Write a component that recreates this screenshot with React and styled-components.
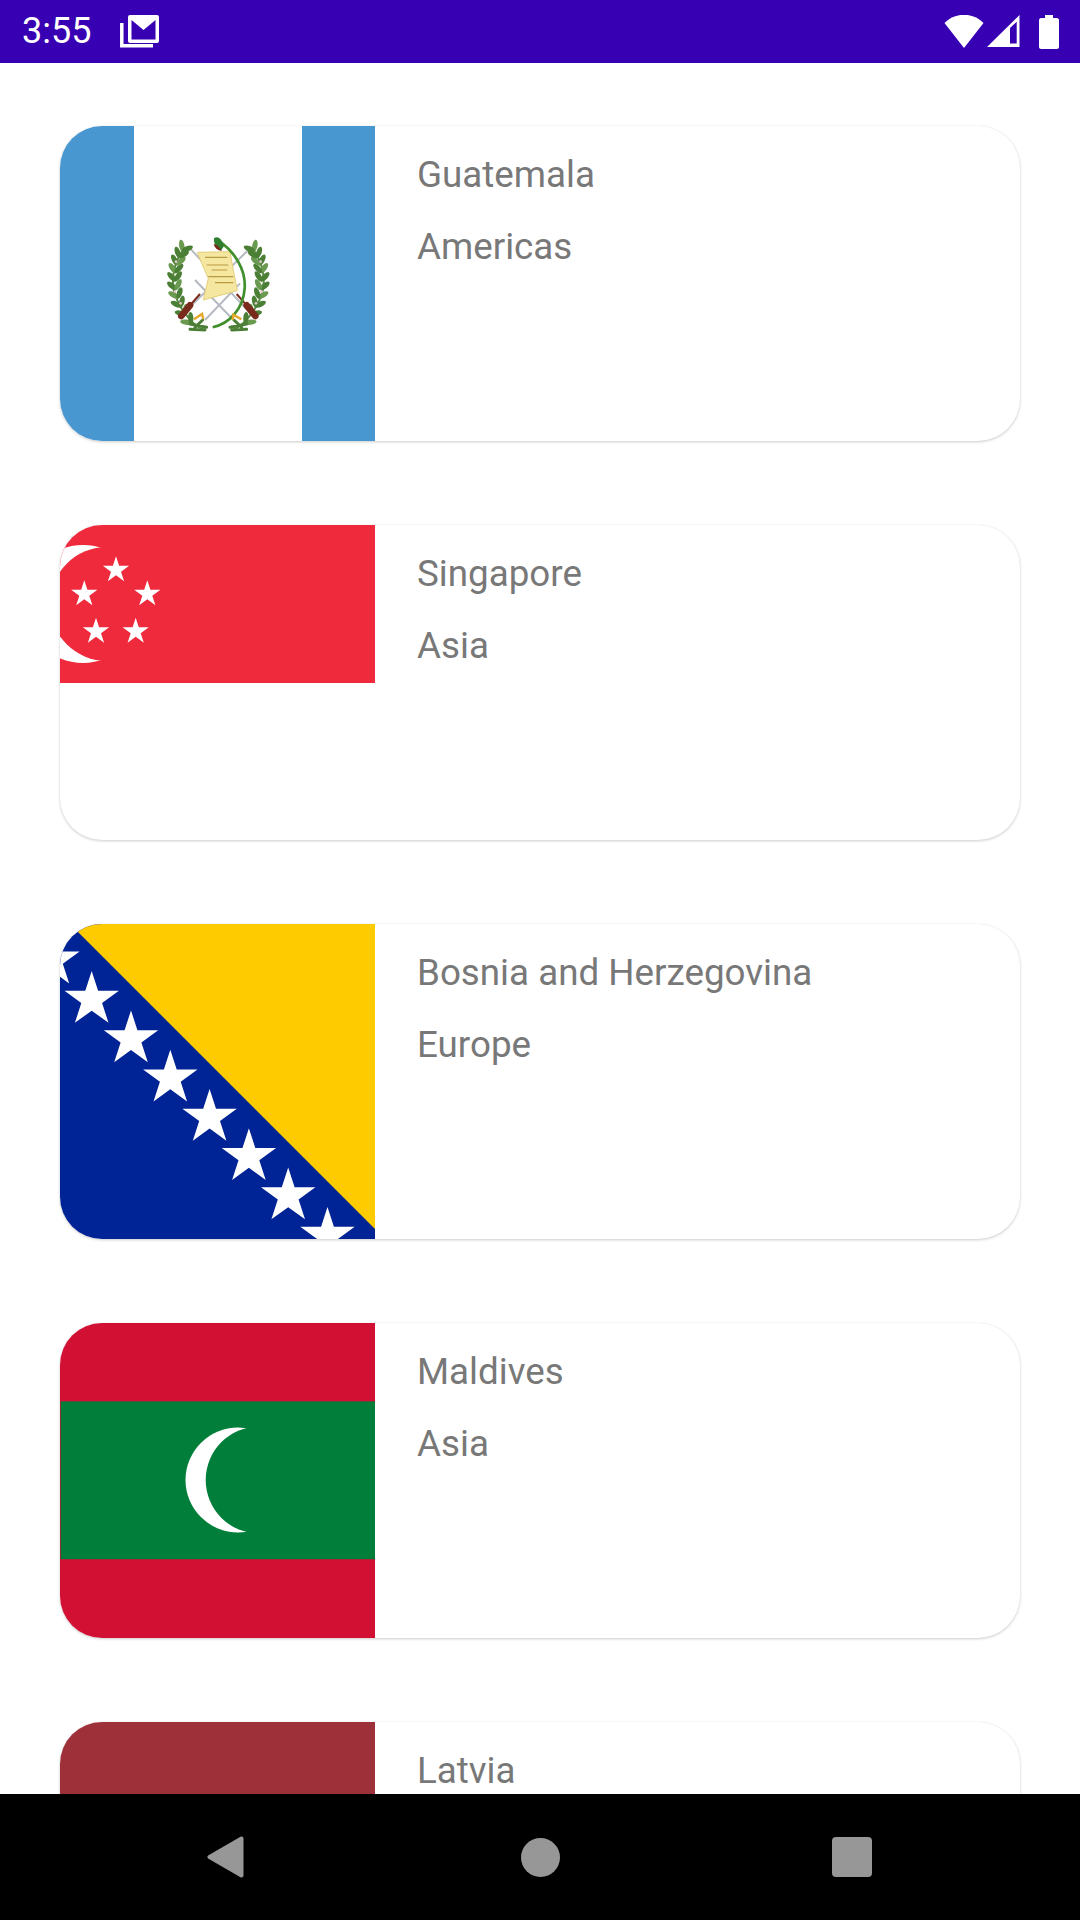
import React from "react";
import styled, { createGlobalStyle } from "styled-components";

const countries = [
  { name: "Guatemala", region: "Americas", Flag: GuatemalaFlag },
  { name: "Singapore", region: "Asia", Flag: SingaporeFlag },
  { name: "Bosnia and Herzegovina", region: "Europe", Flag: BosniaFlag },
  { name: "Maldives", region: "Asia", Flag: MaldivesFlag },
  { name: "Latvia", Flag: LatviaFlag },
];

// five pointed star with the tip up, as a polygon points string
const starPoints = (cx, cy, r) => {
  const pts = [];
  for (let i = 0; i < 10; i++) {
    const radius = i % 2 === 0 ? r : r * 0.382;
    const angle = (Math.PI / 5) * i - Math.PI / 2;
    pts.push(`${(cx + radius * Math.cos(angle)).toFixed(2)},${(cy + radius * Math.sin(angle)).toFixed(2)}`);
  }
  return pts.join(" ");
};

const App = () => {
  return (
    <Screen>
      <GlobalStyle />
      <StatusBar>
        <StatusLeft>
          <Clock>3:55</Clock>
          <MailIcon />
        </StatusLeft>
        <StatusRight>
          <WifiIcon />
          <SignalIcon />
          <BatteryIcon />
        </StatusRight>
      </StatusBar>
      <CountryList>
        {countries.map(({ name, region, Flag }) => (
          <CountryCard key={name}>
            <FlagBox>
              <Flag />
            </FlagBox>
            <CardText>
              <CardLine>{name}</CardLine>
              {region && <CardLine>{region}</CardLine>}
            </CardText>
          </CountryCard>
        ))}
      </CountryList>
      <NavBar>
        <NavIcon width="37" height="42" viewBox="0 0 37 42">
          <polygon points="2.500,21 34.500,2.500 34.500,39.500" fill="#979797" stroke="#979797" strokeWidth="4" strokeLinejoin="round" />
        </NavIcon>
        <NavIcon width="39" height="39" viewBox="0 0 39 39" $left="277px">
          <circle cx="19.5" cy="19.5" r="19.5" fill="#979797" />
        </NavIcon>
        <NavIcon width="40" height="40" viewBox="0 0 40 40" $left="272px">
          <rect width="40" height="40" rx="4" fill="#979797" />
        </NavIcon>
      </NavBar>
    </Screen>
  );
};

function MailIcon() {
  return (
    <StatusSvg width="40" height="33" viewBox="0 0 40 33" $left="8px">
      <path d="M1.800 8 V30.700 H33" fill="none" stroke="#fff" strokeWidth="3.500" />
      <rect x="8" y="0" width="31" height="28" rx="2" fill="#fff" />
      <path d="M11.500 5 L23.500 15 L35.500 5 V24.500 H11.500 Z" fill="#3700B3" />
    </StatusSvg>
  );
}

function WifiIcon() {
  return (
    <StatusSvg width="40" height="33" viewBox="0 0 40 33">
      <path d="M0.500 8 C11 -3 29 -3 39.500 8 L20 33 Z" fill="#fff" />
    </StatusSvg>
  );
}

function SignalIcon() {
  return (
    <StatusSvg width="33" height="33" viewBox="0 0 33 33" $left="3px">
      <path d="M32.500 0 V32 H0 Z" fill="#fff" />
      <path d="M23 13 L29.700 6.700 V28.500 H23 Z" fill="#3700B3" />
    </StatusSvg>
  );
}

function BatteryIcon() {
  return (
    <StatusSvg width="20" height="34" viewBox="0 0 20 34" $left="19px">
      <path d="M6 0 H14 V3 H18 C19 3 20 4 20 5 V32 C20 33 19 34 18 34 H2 C1 34 0 33 0 32 V5 C0 4 1 3 2 3 H6 Z" fill="#fff" />
    </StatusSvg>
  );
}

// leaves of one wreath branch, placed in pairs along a cubic stem
const wreathLeaves = () => {
  const p = [[165, 322], [95, 250], [92, 150], [128, 92]];
  const leaves = [];
  const n = 9;
  for (let i = 0; i <= n; i++) {
    const t = 0.06 + (i / n) * 0.94;
    const u = 1 - t;
    const x = u * u * u * p[0][0] + 3 * u * u * t * p[1][0] + 3 * u * t * t * p[2][0] + t * t * t * p[3][0];
    const y = u * u * u * p[0][1] + 3 * u * u * t * p[1][1] + 3 * u * t * t * p[2][1] + t * t * t * p[3][1];
    const dx = 3 * u * u * (p[1][0] - p[0][0]) + 6 * u * t * (p[2][0] - p[1][0]) + 3 * t * t * (p[3][0] - p[2][0]);
    const dy = 3 * u * u * (p[1][1] - p[0][1]) + 6 * u * t * (p[2][1] - p[1][1]) + 3 * t * t * (p[3][1] - p[2][1]);
    const angle = (Math.atan2(dy, dx) * 180) / Math.PI;
    [-42, 36].forEach((off) => {
      const a = angle + off;
      const rad = (a * Math.PI) / 180;
      leaves.push({ x: x + Math.cos(rad) * 15, y: y + Math.sin(rad) * 15, a });
    });
  }
  return leaves;
};

function Wreath() {
  return (
    <g>
      <path d="M190 328 C160 320 112 262 100 205 C95 160 105 125 128 92" fill="none" stroke="#5B8A42" strokeWidth="6" />
      {wreathLeaves().map(({ x, y, a }, i) => (
        <ellipse key={i} cx={x} cy={y} rx="18" ry="8" fill={i % 3 === 0 ? "#6B9A50" : "#4C7F36"} transform={`rotate(${a} ${x} ${y})`} />
      ))}
      <path d="M200 322 L150 312 M195 330 L150 328 M188 300 L165 322" stroke="#4C7F36" strokeWidth="9" strokeLinecap="round" />
      <circle cx="108" cy="125" r="4" fill="#E3C6CF" />
      <circle cx="105" cy="215" r="4" fill="#E3C6CF" />
      <circle cx="122" cy="250" r="4" fill="#E3C6CF" />
      <path d="M124 288 L150 256" stroke="#7A2B1C" strokeWidth="20" strokeLinecap="round" />
      <path d="M150 256 L180 222" stroke="#7A2B1C" strokeWidth="6" />
    </g>
  );
}

function GuatemalaFlag() {
  return (
    <FlagSvg viewBox="0 0 315 315" height="315">
      <rect width="315" height="315" fill="#fff" />
      <rect width="74" height="315" fill="#4997D0" />
      <rect x="242" width="73" height="315" fill="#4997D0" />
      <defs>
        <filter id="soft" x="-10%" y="-10%" width="120%" height="120%">
          <feGaussianBlur stdDeviation="1.200" />
        </filter>
      </defs>
      {/* drawn in a 450x360 box, then scaled down to the emblem's place */}
      <g transform="translate(80 94) scale(0.3333)" filter="url(#soft)">
        <path d="M150 85 L345 295 M325 90 L115 295 M165 180 L280 300 M195 300 L300 190" stroke="#B5BAC0" strokeWidth="6" fill="none" />
        <Wreath />
        <g transform="matrix(-1 0 0 1 470 0)">
          <Wreath />
        </g>
        <path d="M172 97 L270 95 L280 150 L292 212 L190 240 L205 175 L185 130 Z" fill="#F5E6A0" stroke="#E3CF7C" strokeWidth="3" />
        <path d="M200 135 H265 M215 150 H262 M205 170 H280 M225 188 H280 M195 112 H262" stroke="#B99A44" strokeWidth="3.500" />
        <path d="M235 62 C285 95 318 150 314 205 C310 265 270 310 218 322" fill="none" stroke="#3F8F2C" strokeWidth="8" />
        <path d="M222 55 C232 46 245 55 252 78 L243 92 C232 88 220 72 222 55 Z" fill="#2F7F2E" />
        <path d="M221 72 C224 85 234 92 246 92 L232 76 Z" fill="#7A2B1C" />
        <path d="M162 298 L186 282 L190 298 M304 298 L280 284 L278 300" fill="none" stroke="#E4A826" strokeWidth="7" />
      </g>
    </FlagSvg>
  );
}

function SingaporeFlag() {
  const stars = [[56, 45], [24.3, 69], [87.3, 69], [36, 106.500], [75.700, 106.500]];
  return (
    <FlagSvg viewBox="0 0 315 158" height="158">
      <rect width="315" height="158" fill="#EE2A3C" />
      <circle cx="23" cy="79" r="59" fill="#fff" />
      <circle cx="47" cy="79" r="57" fill="#EE2A3C" />
      {stars.map(([x, y]) => (
        <polygon key={x} points={starPoints(x, y, 13.8)} fill="#fff" />
      ))}
    </FlagSvg>
  );
}

function BosniaFlag() {
  const stars = [-1, 0, 1, 2, 3, 4, 5, 6];
  return (
    <FlagSvg viewBox="0 0 315 315" height="315">
      <rect width="315" height="315" fill="#002395" />
      <polygon points="10,0 315,0 315,305" fill="#FECB00" />
      {stars.map((i) => (
        <polygon key={i} points={starPoints(31.7 + i * 39.3, 75.7 + i * 39.3, 28.6)} fill="#fff" />
      ))}
    </FlagSvg>
  );
}

function MaldivesFlag() {
  return (
    <FlagSvg viewBox="0 0 315 315" height="315">
      <rect width="315" height="315" fill="#D21034" />
      <rect x="0.7" y="78.4" width="314.3" height="157.8" fill="#007E3A" />
      <circle cx="178" cy="157" r="52.5" fill="#fff" />
      <circle cx="199.4" cy="157" r="53.7" fill="#007E3A" />
    </FlagSvg>
  );
}

function LatviaFlag() {
  return (
    <FlagSvg viewBox="0 0 315 315" height="315">
      <rect width="315" height="315" fill="#9E3039" />
    </FlagSvg>
  );
}

const GlobalStyle = createGlobalStyle`
  html, body {
    margin: 0;
    padding: 0;
    background: #fff;
  }
`;

const Screen = styled.div`
  width: 1080px;
  height: 1920px;
  display: flex;
  flex-direction: column;
  overflow: hidden;
  background: #fff;
  font-family: Roboto, "Liberation Sans", sans-serif;
`;

const StatusBar = styled.div`
  height: 63px;
  flex: none;
  display: flex;
  align-items: center;
  justify-content: space-between;
  padding: 0 21px 0 22px;
  background: #3700b3;
`;

const StatusLeft = styled.div`
  display: flex;
  align-items: center;
`;

const StatusRight = styled.div`
  display: flex;
  align-items: center;
`;

const Clock = styled.span`
  color: #fff;
  font-size: 36px;
  line-height: 63px;
  width: 90px;
`;

const StatusSvg = styled.svg`
  display: block;
  flex: none;
  margin-left: ${(p) => p.$left || "0"};
`;

const CountryList = styled.div`
  flex: 1;
  min-height: 0;
  overflow: hidden;
  display: flex;
  flex-direction: column;
  gap: 84px;
  padding: 63px 60px 0;
`;

const CountryCard = styled.div`
  flex: none;
  height: 315px;
  display: flex;
  overflow: hidden;
  border-radius: 42px;
  background: #fff;
  box-shadow: 0 1px 3px rgba(0, 0, 0, 0.2), 0 0 1px rgba(0, 0, 0, 0.07);
`;

const FlagBox = styled.div`
  flex: none;
  width: 315px;
  height: 315px;
`;

const FlagSvg = styled.svg`
  display: block;
  width: 315px;
`;

const CardText = styled.div`
  flex: 1;
  display: flex;
  flex-direction: column;
  gap: 30px;
  padding: 28px 42px 0;
`;

const CardLine = styled.div`
  color: #787878;
  font-size: 36.75px;
  line-height: 42px;
`;

const NavBar = styled.div`
  height: 126px;
  flex: none;
  display: flex;
  align-items: center;
  padding-left: 207px;
  background: #000;
`;

const NavIcon = styled.svg`
  display: block;
  flex: none;
  margin-left: ${(p) => p.$left || "0"};
`;

export default App;
